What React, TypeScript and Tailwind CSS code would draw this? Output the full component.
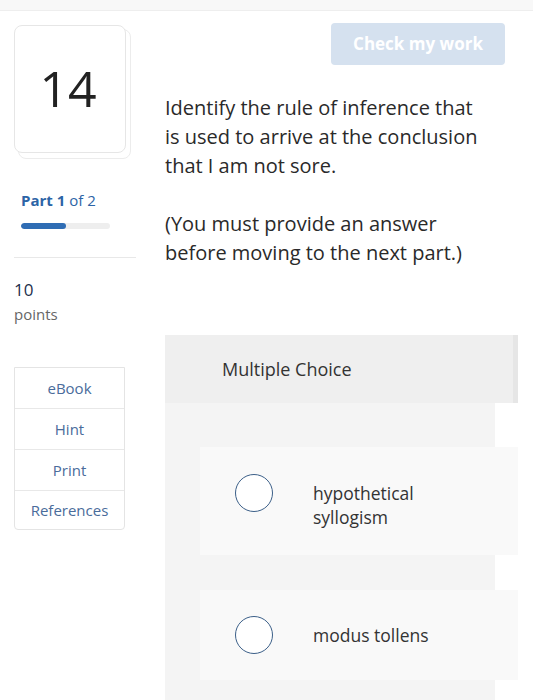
import React from 'react'

const font = { fontFamily: '"Open Sans", "Liberation Sans", sans-serif' }

function Radio() {
  return <span className="block w-[38px] h-[38px] rounded-full border-[1.5px] border-[#3b5f88] bg-white shrink-0" />
}

function Option({ children, className }: { children: React.ReactNode; className: string }) {
  return (
    <div className={`ml-[35px] w-[318px] bg-[#f9f9f9] flex ${className}`}>
      <div className="w-[113px] flex pl-[35px]">
        <Radio />
      </div>
      <div className="text-[17.5px] leading-[24px] text-[#333]">{children}</div>
    </div>
  )
}

export default function App() {
  const tools = ['eBook', 'Hint', 'Print', 'References']
  return (
    <div className="w-[533px] h-[700px] bg-white overflow-hidden" style={font}>
      <div className="h-[11px] bg-[#f8f8f8] border-b border-[#eeeeee]" />
      <div className="flex">
        {/* left column */}
        <div className="w-[165px] shrink-0 pl-[14px] pt-[14px]">
          <div className="relative w-[117px] h-[134px]">
            <div className="absolute left-[4px] top-[4px] w-[113px] h-[130px] rounded-[8px] border border-[#ececec] bg-white" />
            <div className="absolute left-0 top-0 w-[112px] h-[128px] rounded-[8px] border border-[#e6e6e6] bg-white flex items-center justify-center">
              <span className="text-[50px] text-[#222] leading-none -mt-[2px] -ml-[4px]">14</span>
            </div>
          </div>
          <div className="pl-[7px] mt-[31px] text-[15px] text-[#2c64a6] leading-5">
            <span className="font-bold">Part 1</span> of 2
          </div>
          <div className="ml-[7px] mt-[13px] w-[89px] h-[6px] rounded-full bg-[#eeeeee] overflow-hidden">
            <div className="w-[45px] h-full rounded-full bg-[#2f6db4]" />
          </div>
          <div className="mt-[28px] w-[122px] border-t border-[#e8e8e8]" />
          <div className="mt-[21px] text-[17px] text-[#1d2f4d] leading-[22px]">10</div>
          <div className="mt-[2px] text-[15px] text-[#666] leading-[22px]">points</div>
          <div className="mt-[42px] w-[111px] border border-[#e4e4e4] rounded-b-[4px]">
            {tools.map((t, i) => (
              <div
                key={t}
                className={`flex items-center justify-center text-[15px] text-[#4a6c9b] ${i === 3 ? 'h-[38px]' : 'h-[41px] border-b border-[#e8e8e8]'}`}
              >
                {t}
              </div>
            ))}
          </div>
        </div>

        {/* right column */}
        <div className="flex-1 flex flex-col">
          <div className="flex justify-end pr-[28px] pt-[12px]">
            <button className="w-[174px] h-[42px] rounded-[4px] bg-[#d5e1ef] text-white text-[17px] font-bold">
              Check my work
            </button>
          </div>
          <div className="mt-[28px] text-[20px] leading-[29px] text-[#2a2a2a]">
            <p>
              Identify the rule of inference that
              <br />
              is used to arrive at the conclusion
              <br />
              that I am not sore.
            </p>
            <p className="mt-[29px]">
              (You must provide an answer
              <br />
              before moving to the next part.)
            </p>
          </div>
          <div className="mt-[68px] w-[353px]">
            <div className="h-[68px] bg-[#efefef] flex items-center pl-[57px] text-[18px] text-[#333] border-r-[5px] border-[#e6e6e6]">
              Multiple Choice
            </div>
            <div className="w-[330px] bg-[#f4f4f4] pt-[44px] pb-[30px]">
              <Option className="h-[108px] items-start pt-[27px]">
                <div className="mt-[7px]">
                  hypothetical
                  <br />
                  syllogism
                </div>
              </Option>
              <Option className="h-[90px] mt-[35px] items-center">modus tollens</Option>
            </div>
          </div>
        </div>
      </div>
    </div>
  )
}
